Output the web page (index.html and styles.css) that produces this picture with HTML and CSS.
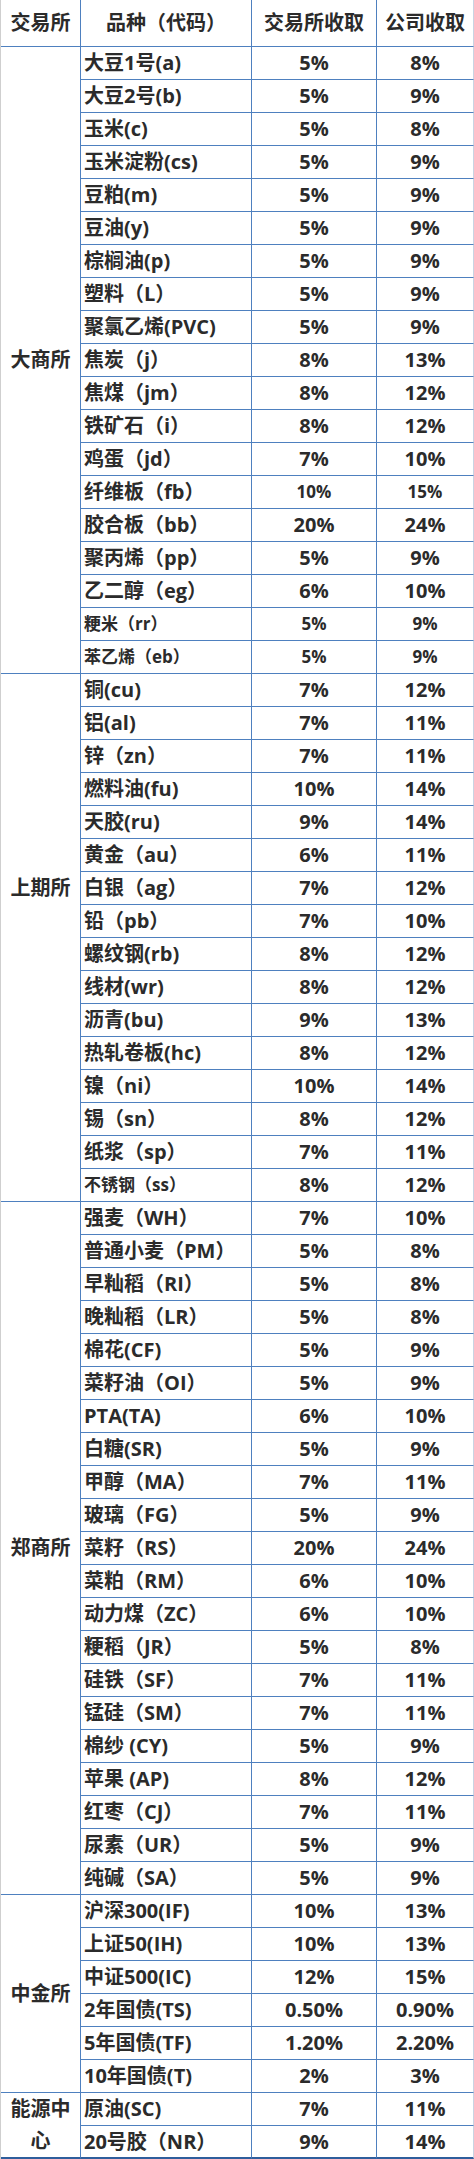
FILE: index.html
```html
<!DOCTYPE html>
<html lang="zh-CN">
<head>
<meta charset="utf-8">
<title>保证金比例</title>
<link rel="stylesheet" href="styles.css">
</head>
<body>
<div class="t">
  <div class="c h">交易所</div><div class="c h">品种（代码）</div><div class="c h">交易所收取</div><div class="c h end">公司收取</div>

  <div class="c ex g19 mid">大商所</div>
  <div class="c n">大豆1号(a)</div><div class="c v">5%</div><div class="c v end">8%</div>
  <div class="c n">大豆2号(b)</div><div class="c v">5%</div><div class="c v end">9%</div>
  <div class="c n">玉米(c)</div><div class="c v">5%</div><div class="c v end">8%</div>
  <div class="c n">玉米淀粉(cs)</div><div class="c v">5%</div><div class="c v end">9%</div>
  <div class="c n">豆粕(m)</div><div class="c v">5%</div><div class="c v end">9%</div>
  <div class="c n">豆油(y)</div><div class="c v">5%</div><div class="c v end">9%</div>
  <div class="c n">棕榈油(p)</div><div class="c v">5%</div><div class="c v end">9%</div>
  <div class="c n">塑料（L）</div><div class="c v">5%</div><div class="c v end">9%</div>
  <div class="c n">聚氯乙烯(PVC)</div><div class="c v">5%</div><div class="c v end">9%</div>
  <div class="c n">焦炭（j）</div><div class="c v">8%</div><div class="c v end">13%</div>
  <div class="c n">焦煤（jm）</div><div class="c v">8%</div><div class="c v end">12%</div>
  <div class="c n">铁矿石（i）</div><div class="c v">8%</div><div class="c v end">12%</div>
  <div class="c n">鸡蛋（jd）</div><div class="c v">7%</div><div class="c v end">10%</div>
  <div class="c n">纤维板（fb）</div><div class="c v sm">10%</div><div class="c v sm end">15%</div>
  <div class="c n">胶合板（bb）</div><div class="c v">20%</div><div class="c v end">24%</div>
  <div class="c n">聚丙烯（pp）</div><div class="c v">5%</div><div class="c v end">9%</div>
  <div class="c n">乙二醇（eg）</div><div class="c v">6%</div><div class="c v end">10%</div>
  <div class="c n sm">粳米（rr）</div><div class="c v sm">5%</div><div class="c v sm end">9%</div>
  <div class="c n sm">苯乙烯（eb）</div><div class="c v sm">5%</div><div class="c v sm end">9%</div>

  <div class="c ex g16 shfe">上期所</div>
  <div class="c n">铜(cu)</div><div class="c v">7%</div><div class="c v end">12%</div>
  <div class="c n">铝(al)</div><div class="c v">7%</div><div class="c v end">11%</div>
  <div class="c n">锌（zn）</div><div class="c v">7%</div><div class="c v end">11%</div>
  <div class="c n">燃料油(fu)</div><div class="c v">10%</div><div class="c v end">14%</div>
  <div class="c n">天胶(ru)</div><div class="c v">9%</div><div class="c v end">14%</div>
  <div class="c n">黄金（au）</div><div class="c v">6%</div><div class="c v end">11%</div>
  <div class="c n">白银（ag）</div><div class="c v">7%</div><div class="c v end">12%</div>
  <div class="c n">铅（pb）</div><div class="c v">7%</div><div class="c v end">10%</div>
  <div class="c n">螺纹钢(rb)</div><div class="c v">8%</div><div class="c v end">12%</div>
  <div class="c n">线材(wr)</div><div class="c v">8%</div><div class="c v end">12%</div>
  <div class="c n">沥青(bu)</div><div class="c v">9%</div><div class="c v end">13%</div>
  <div class="c n">热轧卷板(hc)</div><div class="c v">8%</div><div class="c v end">12%</div>
  <div class="c n">镍（ni）</div><div class="c v">10%</div><div class="c v end">14%</div>
  <div class="c n">锡（sn）</div><div class="c v">8%</div><div class="c v end">12%</div>
  <div class="c n">纸浆（sp）</div><div class="c v">7%</div><div class="c v end">11%</div>
  <div class="c n sm">不锈钢（ss）</div><div class="c v">8%</div><div class="c v end">12%</div>

  <div class="c ex g21 mid">郑商所</div>
  <div class="c n">强麦（WH）</div><div class="c v">7%</div><div class="c v end">10%</div>
  <div class="c n">普通小麦（PM）</div><div class="c v">5%</div><div class="c v end">8%</div>
  <div class="c n">早籼稻（RI）</div><div class="c v">5%</div><div class="c v end">8%</div>
  <div class="c n">晚籼稻（LR）</div><div class="c v">5%</div><div class="c v end">8%</div>
  <div class="c n">棉花(CF)</div><div class="c v">5%</div><div class="c v end">9%</div>
  <div class="c n">菜籽油（OI）</div><div class="c v">5%</div><div class="c v end">9%</div>
  <div class="c n">PTA(TA)</div><div class="c v">6%</div><div class="c v end">10%</div>
  <div class="c n">白糖(SR)</div><div class="c v">5%</div><div class="c v end">9%</div>
  <div class="c n">甲醇（MA）</div><div class="c v">7%</div><div class="c v end">11%</div>
  <div class="c n">玻璃（FG）</div><div class="c v">5%</div><div class="c v end">9%</div>
  <div class="c n">菜籽（RS）</div><div class="c v">20%</div><div class="c v end">24%</div>
  <div class="c n">菜粕（RM）</div><div class="c v">6%</div><div class="c v end">10%</div>
  <div class="c n">动力煤（ZC）</div><div class="c v">6%</div><div class="c v end">10%</div>
  <div class="c n">粳稻（JR）</div><div class="c v">5%</div><div class="c v end">8%</div>
  <div class="c n">硅铁（SF）</div><div class="c v">7%</div><div class="c v end">11%</div>
  <div class="c n">锰硅（SM）</div><div class="c v">7%</div><div class="c v end">11%</div>
  <div class="c n">棉纱 (CY)</div><div class="c v">5%</div><div class="c v end">9%</div>
  <div class="c n">苹果 (AP)</div><div class="c v">8%</div><div class="c v end">12%</div>
  <div class="c n">红枣（CJ）</div><div class="c v">7%</div><div class="c v end">11%</div>
  <div class="c n">尿素（UR）</div><div class="c v">5%</div><div class="c v end">9%</div>
  <div class="c n">纯碱（SA）</div><div class="c v">5%</div><div class="c v end">9%</div>

  <div class="c ex g6 mid">中金所</div>
  <div class="c n">沪深300(IF)</div><div class="c v">10%</div><div class="c v end">13%</div>
  <div class="c n">上证50(IH)</div><div class="c v">10%</div><div class="c v end">13%</div>
  <div class="c n">中证500(IC)</div><div class="c v">12%</div><div class="c v end">15%</div>
  <div class="c n">2年国债(TS)</div><div class="c v">0.50%</div><div class="c v end">0.90%</div>
  <div class="c n">5年国债(TF)</div><div class="c v">1.20%</div><div class="c v end">2.20%</div>
  <div class="c n">10年国债(T)</div><div class="c v">2%</div><div class="c v end">3%</div>

  <div class="c ex g2 mid wrap last">能源中心</div>
  <div class="c n">原油(SC)</div><div class="c v">7%</div><div class="c v end">11%</div>
  <div class="c n last">20号胶（NR）</div><div class="c v last">9%</div><div class="c v end last">14%</div>
</div>
</body>
</html>
```

FILE: styles.css
```css
html, body {
  margin: 0;
  padding: 0;
  background: #ffffff;
}

.t {
  box-sizing: border-box;
  width: 474px;
  display: grid;
  grid-template-columns: 80px 171px 125px 97px;
  grid-template-rows: 47px;
  grid-auto-rows: 33px;
  border-left: 1px solid #cfcfcf;
  font-family: "Open Sans", "Noto Sans CJK SC", sans-serif;
  font-weight: 700;
  color: #2b2b2b;
  font-size: 20px;
}

.c {
  box-sizing: border-box;
  border-right: 1px solid #4e80bf;
  border-bottom: 1px solid #4e80bf;
  display: flex;
  align-items: center;
  white-space: nowrap;
  line-height: 32px;
}

.h {
  justify-content: center;
  font-size: 20px;
}

.end {
  border-right-color: #c9d4e3;
}

.n {
  padding-left: 3px;
}

.v {
  justify-content: center;
}

.sm {
  font-size: 17px;
}

.ex {
  justify-content: center;
  font-size: 20px;
}

.mid {
  align-items: center;
}

.shfe {
  align-items: flex-start;
  padding-top: 198px;
}

.wrap {
  white-space: normal;
  text-align: center;
  word-break: break-all;
  padding: 0 1px;
}

.g19 { grid-row: span 19; }
.g16 { grid-row: span 16; }
.g21 { grid-row: span 21; }
.g6 { grid-row: span 6; }
.g2 { grid-row: span 2; }

.last {
  border-bottom: 2px solid #2f5e9c;
}
```
